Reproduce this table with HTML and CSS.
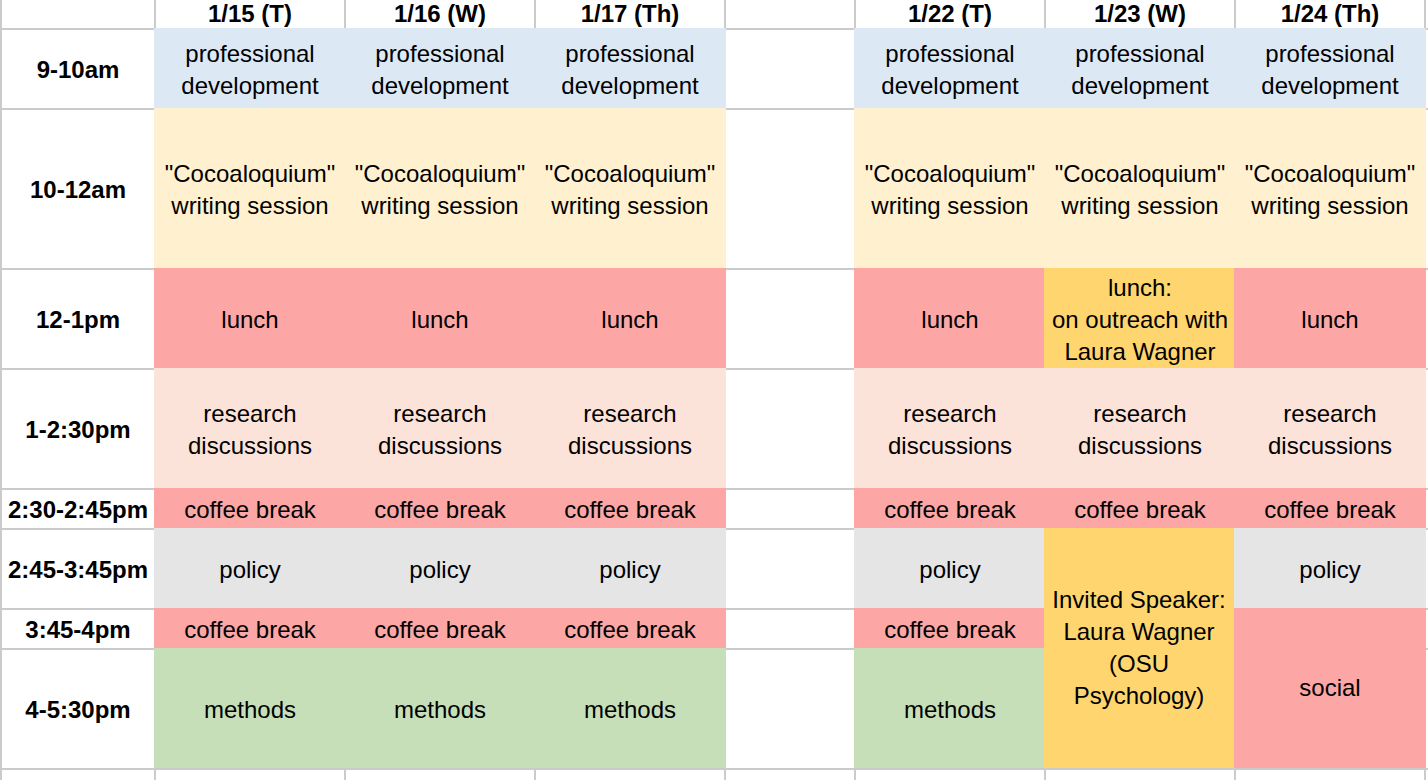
FILE: index.html
```html
<!DOCTYPE html>
<html lang="en">
<head>
<meta charset="utf-8">
<title>Schedule</title>
<link rel="stylesheet" href="styles.css">
</head>
<body>
<div class="sheet">
  <!-- header row -->
  <div class="head"></div>
  <div class="head">1/15 (T)</div>
  <div class="head">1/16 (W)</div>
  <div class="head">1/17 (Th)</div>
  <div class="head"></div>
  <div class="head">1/22 (T)</div>
  <div class="head">1/23 (W)</div>
  <div class="head">1/24 (Th)</div>
  <div class="head"></div>

  <!-- 9-10am -->
  <div class="cell time">9-10am</div>
  <div class="c pd">professional<br>development</div>
  <div class="c pd">professional<br>development</div>
  <div class="c pd">professional<br>development</div>
  <div class="cell"></div>
  <div class="c pd">professional<br>development</div>
  <div class="c pd">professional<br>development</div>
  <div class="c pd">professional<br>development</div>
  <div class="cell"></div>

  <!-- 10-12am -->
  <div class="cell time">10-12am</div>
  <div class="c cw">"Cocoaloquium"<br>writing session</div>
  <div class="c cw">"Cocoaloquium"<br>writing session</div>
  <div class="c cw">"Cocoaloquium"<br>writing session</div>
  <div class="cell"></div>
  <div class="c cw">"Cocoaloquium"<br>writing session</div>
  <div class="c cw">"Cocoaloquium"<br>writing session</div>
  <div class="c cw">"Cocoaloquium"<br>writing session</div>
  <div class="cell"></div>

  <!-- 12-1pm -->
  <div class="cell time">12-1pm</div>
  <div class="c red">lunch</div>
  <div class="c red">lunch</div>
  <div class="c red">lunch</div>
  <div class="cell"></div>
  <div class="c red">lunch</div>
  <div class="c gold">lunch:<br>on outreach with<br>Laura Wagner</div>
  <div class="c red">lunch</div>
  <div class="cell"></div>

  <!-- 1-2:30pm -->
  <div class="cell time">1-2:30pm</div>
  <div class="c rd">research<br>discussions</div>
  <div class="c rd">research<br>discussions</div>
  <div class="c rd">research<br>discussions</div>
  <div class="cell"></div>
  <div class="c rd">research<br>discussions</div>
  <div class="c rd">research<br>discussions</div>
  <div class="c rd">research<br>discussions</div>
  <div class="cell"></div>

  <!-- 2:30-2:45pm -->
  <div class="cell time">2:30-2:45pm</div>
  <div class="c red">coffee break</div>
  <div class="c red">coffee break</div>
  <div class="c red">coffee break</div>
  <div class="cell"></div>
  <div class="c red">coffee break</div>
  <div class="c red">coffee break</div>
  <div class="c red">coffee break</div>
  <div class="cell"></div>

  <!-- 2:45-3:45pm -->
  <div class="cell time">2:45-3:45pm</div>
  <div class="c grey">policy</div>
  <div class="c grey">policy</div>
  <div class="c grey">policy</div>
  <div class="cell"></div>
  <div class="c grey">policy</div>
  <div class="c gold span3">Invited Speaker:<br>Laura Wagner<br>(OSU<br>Psychology)</div>
  <div class="c grey">policy</div>
  <div class="cell"></div>

  <!-- 3:45-4pm -->
  <div class="cell time">3:45-4pm</div>
  <div class="c red">coffee break</div>
  <div class="c red">coffee break</div>
  <div class="c red">coffee break</div>
  <div class="cell"></div>
  <div class="c red">coffee break</div>
  <div class="c red span2">social</div>
  <div class="cell"></div>

  <!-- 4-5:30pm -->
  <div class="cell time">4-5:30pm</div>
  <div class="c green">methods</div>
  <div class="c green">methods</div>
  <div class="c green">methods</div>
  <div class="cell"></div>
  <div class="c green">methods</div>
  <div class="cell"></div>

  <!-- trailing empty row -->
  <div class="cell"></div>
  <div class="cell"></div>
  <div class="cell"></div>
  <div class="cell"></div>
  <div class="cell"></div>
  <div class="cell"></div>
  <div class="cell"></div>
  <div class="cell"></div>
  <div class="cell"></div>
</div>
</body>
</html>
```

FILE: styles.css
```css
html, body {
  margin: 0;
  padding: 0;
  background: #ffffff;
}

body {
  overflow: hidden;
  font-family: "Liberation Sans", Arial, sans-serif;
  color: #000000;
}

.sheet {
  display: grid;
  grid-template-columns: 154px 190px 190px 190px 130px 190px 190px 190px 4px;
  grid-template-rows: 28px 80px 160px 100px 120px 40px 80px 40px 120px 12px;
  width: 1428px;
  font-size: 24px;
}

.head {
  box-sizing: border-box;
  border-left: 2px solid #cbcbcb;
  display: flex;
  align-items: flex-end;
  justify-content: center;
  font-weight: bold;
  line-height: normal;
  white-space: nowrap;
  overflow: hidden;
}

.cell {
  box-sizing: border-box;
  border-left: 2px solid #cbcbcb;
  border-top: 2px solid #cbcbcb;
  background: #ffffff;
}

.time {
  display: flex;
  align-items: center;
  justify-content: center;
  padding-top: 2px;
  font-weight: bold;
  line-height: 32px;
  white-space: nowrap;
}

.c {
  position: relative;
  z-index: 1;
  box-sizing: border-box;
  margin-right: -2px;
  padding-top: 4px;
  display: flex;
  align-items: center;
  justify-content: center;
  text-align: center;
  line-height: 32px;
  white-space: nowrap;
}

.span3 {
  grid-row: span 3;
  z-index: 2;
  margin-right: 0;
  padding-top: 0;
}

.span2 {
  grid-row: span 2;
  z-index: 2;
  padding-top: 0;
}

.pd { background: #dce9f5; }
.cw { background: #fff1cf; }
.red { background: #fca6a5; }
.rd { background: #fce3d9; }
.grey { background: #e5e5e5; }
.green { background: #c7dfb8; }
.gold { background: #fed56f; }
```
